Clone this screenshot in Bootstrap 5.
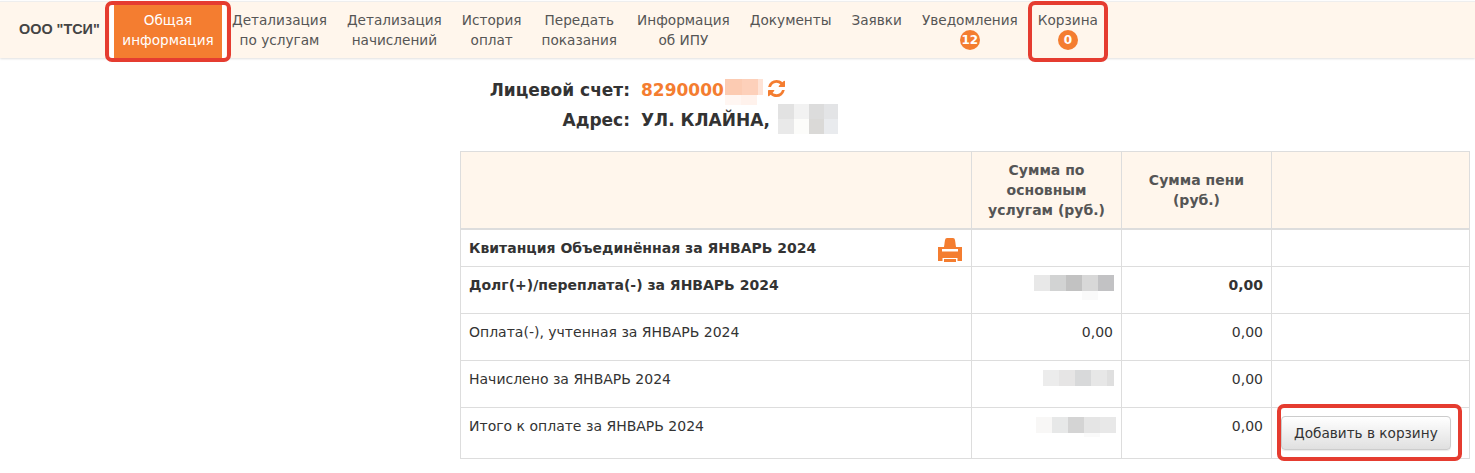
<!DOCTYPE html>
<html lang="ru">
<head>
    <meta charset="UTF-8">
    <title>Общая информация</title>
    <link href="https://cdn.jsdelivr.net/npm/bootstrap@5.3.0/dist/css/bootstrap.min.css" rel="stylesheet">
    <style>
        body { font-family: "DejaVu Sans", sans-serif; font-size: 14px; color: #333; background: #fff; min-height: 100vh; }
        .top-bar { background: #fff6ec; height: 57px; margin-top: 1px; padding: 0; border-top: 1px solid #eee; box-shadow: 0 1px 2px rgba(0,0,0,.12); flex-wrap: nowrap; justify-content: flex-start; }
        .top-brand { font-family: "Liberation Sans", sans-serif; font-weight: 700; font-size: 14.4px; color: #444; padding: 0 5px 0 19px; margin: 0; width: 114px; white-space: nowrap; }
        .top-links { flex-direction: row; flex-wrap: nowrap; align-items: stretch; height: 100%; font-size: 13.65px; }
        .top-links .nav-link { color: #555; text-align: center; line-height: 20px; padding: 8px 10px 0; height: 56px; white-space: nowrap; }
        .top-links .nav-link.active { background: #f47d30; color: #fff; width: 108px; padding-left: 0; padding-right: 0; box-shadow: -4px 0 0 #fff, 4px 0 0 #fff; }
        .count-pill { display: block; width: 20px; height: 20px; margin: 0 auto; border-radius: 50%; background: #f47d30; color: #fff; font-size: 12px; font-weight: 700; line-height: 20px; text-align: center; }
        .red-frame { position: relative; }
        .red-frame::after { content: ""; position: absolute; border: 4px solid #e53c30; border-radius: 7px; pointer-events: none; z-index: 5; }
        .frame-active::after { inset: -1px -9px -4px -9px; }
        .frame-cart::after { inset: -1px 0 -4px 0; }
        .frame-table::after { right: 8px; bottom: -2px; width: 185px; height: 57px; }
        .side-gap { width: 460px; flex-shrink: 0; }
        .info-grid { display: grid; grid-template-columns: 170px auto; grid-auto-rows: 30px; column-gap: 11px; font-size: 17px; font-weight: 700; line-height: 30px; padding-top: 17px; height: 93px; color: #333; }
        .info-grid dt { margin: 0; font-weight: 700; white-space: nowrap; text-align: right; }
        .info-grid dd { margin: 0; font-weight: 700; white-space: nowrap; display: flex; align-items: flex-start; }
        .acc-num { color: #f47d30; }
        .blur-bits { display: inline-block; vertical-align: top; }
        .blur-acc { margin: 4px 0 0 1px; }
        .blur-addr { margin: -1px 0 0 8px; }
        .sync-ico { margin: 5px 0 0 5px; }
        .bill-table { width: 1009px; table-layout: fixed; margin: 0; border-color: #ddd; color: #333; font-size: 14px; }
        .bill-table > :not(caption) > * > * { padding: 8px; border-color: #ddd; line-height: 20px; box-shadow: none; }
        .bill-table thead th { background: #fff6ec; color: #555; text-align: center; vertical-align: middle; border-bottom-width: 2px; border-bottom-color: #ddd; height: 77px; font-size: 14px; }
        .bill-table > tbody { border-top: 0; }
        .bill-table td.money { text-align: right; }
        .row-short td { height: 37px; }
        .row-mid td { height: 47px; }
        .row-last td { height: 51px; }
        .label-line { display: flex; justify-content: space-between; align-items: flex-start; }
        .print-ico { margin: 0 1px -9px 0; flex-shrink: 0; }
        .blur-r1 { margin-right: -1px; }
        .blur-r1-down { margin: 1px -1px 0 0; }
        .blur-r3-down { margin: 1px -3px 0 0; }
        .basket-btn { background: linear-gradient(#fff, #e0e0e0); border: 1px solid #ccc; color: #333; font-size: 13.65px; line-height: 18px; padding: 7px 12px; border-radius: 4px; white-space: nowrap; box-shadow: 0 1px 1px rgba(0,0,0,.08); }
        .bill-table td.btn-cell { padding: 8px 0 0 9px; }
    </style>
</head>
<body>
    <nav class="navbar top-bar">
        <span class="navbar-brand top-brand">ООО "ТСИ"</span>
        <ul class="nav top-links">
            <li class="nav-item red-frame frame-active"><a class="nav-link active" href="#">Общая<br>информация</a></li>
            <li class="nav-item"><a class="nav-link" href="#">Детализация<br>по услугам</a></li>
            <li class="nav-item"><a class="nav-link" href="#">Детализация<br>начислений</a></li>
            <li class="nav-item"><a class="nav-link" href="#">История<br>оплат</a></li>
            <li class="nav-item"><a class="nav-link" href="#">Передать<br>показания</a></li>
            <li class="nav-item"><a class="nav-link" href="#">Информация<br>об ИПУ</a></li>
            <li class="nav-item"><a class="nav-link" href="#">Документы</a></li>
            <li class="nav-item"><a class="nav-link" href="#">Заявки</a></li>
            <li class="nav-item"><a class="nav-link" href="#">Уведомления<span class="count-pill">12</span></a></li>
            <li class="nav-item red-frame frame-cart"><a class="nav-link" href="#">Корзина<span class="count-pill">0</span></a></li>
        </ul>
    </nav>

    <div class="d-flex">
        <div class="side-gap"></div>
        <div>
            <dl class="info-grid mb-0">
                <dt>Лицевой счет:</dt>
                <dd><span class="acc-num">8290000</span><svg class="blur-bits blur-acc" width="38" height="26" shape-rendering="crispEdges"><rect y="0" width="17" height="16" fill="#fccbb2"/><rect x="17" y="0" width="16" height="16" fill="#fdd0ba"/><rect x="33" y="0" width="5" height="16" fill="#fee3d6"/><rect y="16" width="16" height="10" fill="#fff6f2"/><rect x="16" y="16" width="16" height="10" fill="#fff2ec"/></svg><svg class="sync-ico" width="17" height="17" viewBox="0 128 1536 1536" fill="#f47d30" aria-hidden="true"><path d="M1511 1056q0 5-1 7-64 268-268 434.5t-478 166.5q-146 0-282.5-55t-243.5-157l-129 129q-19 19-45 19t-45-19-19-45v-448q0-26 19-45t45-19h448q26 0 45 19t19 45-19 45l-137 137q71 66 161 102t187 36q134 0 250-65t186-179q11-17 53-117 8-23 30-23h192q13 0 22.5 9.5t9.5 22.5zm25-800v448q0 26-19 45t-45 19h-448q-26 0-45-19t-19-45 19-45l138-138q-148-137-349-137-134 0-250 65t-186 179q-11 17-53 117-8 23-30 23h-199q-13 0-22.5-9.5t-9.5-22.5v-7q65-268 270-434.5t480-166.5q146 0 284 55.5t245 156.5l130-129q19-19 45-19t45 19 19 45z"/></svg></dd>
                <dt>Адрес:</dt>
                <dd>УЛ. КЛАЙНА,<svg class="blur-bits blur-addr" width="60" height="30" shape-rendering="crispEdges"><rect y="0" width="16" height="15" fill="#e2e2e2"/><rect x="16" y="0" width="15" height="15" fill="#f2f2f2"/><rect x="31" y="0" width="15" height="15" fill="#dcdcdc"/><rect x="46" y="0" width="14" height="15" fill="#e3e4e6"/><rect y="15" width="16" height="15" fill="#e9e9e9"/><rect x="16" y="15" width="15" height="15" fill="#fcfcfa"/><rect x="31" y="15" width="15" height="15" fill="#dad9d7"/><rect x="46" y="15" width="14" height="15" fill="#e9ebee"/></svg></dd>
            </dl>
            <div class="red-frame frame-table">
            <table class="table table-bordered bill-table">
                <colgroup>
                    <col style="width:511px">
                    <col style="width:150px">
                    <col style="width:150px">
                    <col style="width:198px">
                </colgroup>
                <thead>
                    <tr>
                        <th></th>
                        <th>Сумма по основным услугам (руб.)</th>
                        <th>Сумма пени<br>(руб.)</th>
                        <th></th>
                    </tr>
                </thead>
                <tbody>
                    <tr class="row-short">
                        <td>
                            <div class="label-line">
                                <b>Квитанция Объединённая за ЯНВАРЬ 2024</b>
                                <svg class="print-ico" width="24" height="24" viewBox="0 0 24 24" fill="#f47d30" aria-hidden="true">
                                    <path d="M6 9 7 2q.3-2 2-2h6q1.7 0 2 2l1 7z"/>
                                    <path fill-rule="evenodd" d="M0 9h24v14h-4.5v-3h-15v3H0zM4 11v2.5h16V11z"/>
                                    <path d="M6 21h12v3H6z"/>
                                </svg>
                            </div>
                        </td>
                        <td></td><td></td><td></td>
                    </tr>
                    <tr class="row-mid fw-bold">
                        <td>Долг(+)/переплата(-) за ЯНВАРЬ 2024</td>
                        <td class="money"><svg class="blur-bits blur-r1" width="80" height="25" shape-rendering="crispEdges"><rect width="16" height="16" fill="#e8e8e8"/><rect x="16" width="16" height="16" fill="#d2d3d3"/><rect x="32" width="16" height="16" fill="#c2c2c2"/><rect x="48" width="16" height="16" fill="#d8d8d8"/><rect x="64" width="16" height="16" fill="#c2c2c4"/><rect x="48" y="16" width="16" height="9" fill="#fafafa"/></svg></td>
                        <td class="money">0,00</td>
                        <td></td>
                    </tr>
                    <tr class="row-mid">
                        <td>Оплата(-), учтенная за ЯНВАРЬ 2024</td>
                        <td class="money">0,00</td>
                        <td class="money">0,00</td>
                        <td></td>
                    </tr>
                    <tr class="row-mid">
                        <td>Начислено за ЯНВАРЬ 2024</td>
                        <td class="money"><svg class="blur-bits blur-r1-down" width="71" height="16" shape-rendering="crispEdges"><rect width="16" height="16" fill="#ececec"/><rect x="16" width="16" height="16" fill="#e6e5e5"/><rect x="32" width="16" height="16" fill="#d8d9da"/><rect x="48" width="16" height="16" fill="#e7e7e7"/><rect x="64" width="7" height="16" fill="#dfdfdf"/></svg></td>
                        <td class="money">0,00</td>
                        <td></td>
                    </tr>
                    <tr class="row-last">
                        <td>Итого к оплате за ЯНВАРЬ 2024</td>
                        <td class="money"><svg class="blur-bits blur-r3-down" width="80" height="20" shape-rendering="crispEdges"><rect width="16" height="16" fill="#f8f7f6"/><rect x="16" width="16" height="16" fill="#e7e8e8"/><rect x="32" width="16" height="16" fill="#d4d4d4"/><rect x="48" width="16" height="16" fill="#e5e5e5"/><rect x="64" width="16" height="16" fill="#e8e8e8"/><rect x="48" y="16" width="16" height="4" fill="#fafafa"/></svg></td>
                        <td class="money">0,00</td>
                        <td class="btn-cell"><button type="button" class="btn basket-btn">Добавить в корзину</button></td>
                    </tr>
                </tbody>
            </table>
            </div>
        </div>
    </div>
    <script src="https://cdn.jsdelivr.net/npm/bootstrap@5.3.0/dist/js/bootstrap.bundle.min.js"></script>
</body>
</html>
